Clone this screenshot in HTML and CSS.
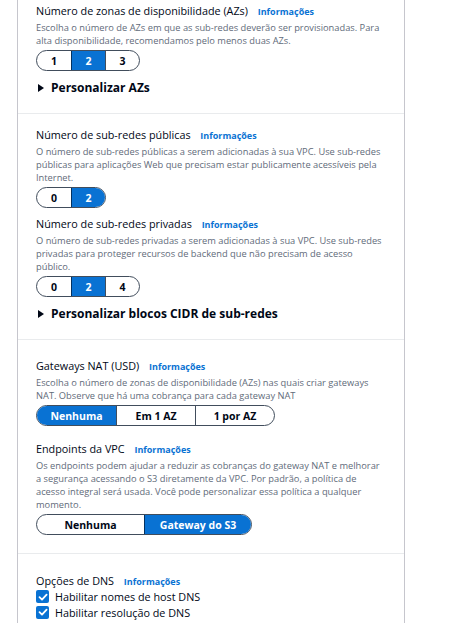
FILE: index.html
```html
<!DOCTYPE html>
<html lang="pt-BR">
<head>
<meta charset="utf-8">
<title>VPC</title>
<link rel="stylesheet" href="styles.css">
</head>
<body>
<div class="panel">
  <section class="section s1">
    <div class="label">Número de zonas de disponibilidade (AZs) <a class="info">Informações</a></div>
    <p class="desc">Escolha o número de AZs em que as sub-redes deverão ser provisionadas. Para alta disponibilidade, recomendamos pelo menos duas AZs.</p>
    <div class="seg seg-small">
      <span class="opt">1</span><span class="opt on">2</span><span class="opt">3</span>
    </div>
    <div class="expand"><span class="tri"></span>Personalizar AZs</div>
  </section>

  <section class="section s2">
    <div class="label">Número de sub-redes públicas <a class="info">Informações</a></div>
    <p class="desc">O número de sub-redes públicas a serem adicionadas à sua VPC. Use sub-redes públicas para aplicações Web que precisam estar publicamente acessíveis pela Internet.</p>
    <div class="seg seg-small">
      <span class="opt">0</span><span class="opt on">2</span>
    </div>
    <div class="label l2">Número de sub-redes privadas <a class="info">Informações</a></div>
    <p class="desc">O número de sub-redes privadas a serem adicionadas à sua VPC. Use sub-redes privadas para proteger recursos de backend que não precisam de acesso público.</p>
    <div class="seg seg-small">
      <span class="opt">0</span><span class="opt on">2</span><span class="opt">4</span>
    </div>
    <div class="expand"><span class="tri"></span>Personalizar blocos CIDR de sub-redes</div>
  </section>

  <section class="section s3">
    <div class="label">Gateways NAT (USD) <a class="info">Informações</a></div>
    <p class="desc">Escolha o número de zonas de disponibilidade (AZs) nas quais criar gateways NAT. Observe que há uma cobrança para cada gateway NAT</p>
    <div class="seg seg-nat">
      <span class="opt on">Nenhuma</span><span class="opt">Em 1 AZ</span><span class="opt">1 por AZ</span>
    </div>
    <div class="label l3">Endpoints da VPC <a class="info">Informações</a></div>
    <p class="desc">Os endpoints podem ajudar a reduzir as cobranças do gateway NAT e melhorar a segurança acessando o S3 diretamente da VPC. Por padrão, a política de acesso integral será usada. Você pode personalizar essa política a qualquer momento.</p>
    <div class="seg seg-ep">
      <span class="opt">Nenhuma</span><span class="opt on">Gateway do S3</span>
    </div>
  </section>

  <section class="section s4">
    <div class="label">Opções de DNS <a class="info">Informações</a></div>
    <label class="check"><span class="box"><svg viewBox="0 0 12 12" width="12" height="12"><path d="M2.5 6.2 L5 8.6 L9.6 3.6" fill="none" stroke="#fff" stroke-width="1.8" stroke-linecap="round" stroke-linejoin="round"/></svg></span>Habilitar nomes de host DNS</label>
    <label class="check"><span class="box"><svg viewBox="0 0 12 12" width="12" height="12"><path d="M2.5 6.2 L5 8.6 L9.6 3.6" fill="none" stroke="#fff" stroke-width="1.8" stroke-linecap="round" stroke-linejoin="round"/></svg></span>Habilitar resolução de DNS</label>
  </section>
</div>
</body>
</html>
```

FILE: styles.css
```css
html, body {
  margin: 0;
  padding: 0;
  background: #ffffff;
}
body {
  font-family: "Open Sans", "Noto Sans", Arial, sans-serif;
  color: #000716;
}
.panel {
  margin-left: 17px;
  width: 386px;
  border-left: 1px solid #c6c6cd;
  border-right: 1px solid #c6c6cd;
  min-height: 623px;
}
.section {
  padding: 0 19px 0 18px;
  border-bottom: 1px solid #e9ebed;
}
.s1 { padding-top: 3px; padding-bottom: 16px; }
.s2 { padding-top: 13px; padding-bottom: 16px; }
.s3 { padding-top: 18px; padding-bottom: 18px; }
.s4 { padding-top: 19px; border-bottom: none; }

.label {
  font-size: 10.8px;
  line-height: 16px;
  color: #000716;
}
.info {
  color: #0972d3;
  font-weight: 700;
  font-size: 9px;
  line-height: 1;
  margin-left: 7px;
}
.desc {
  margin: 2px 0 0;
  font-size: 9.3px;
  line-height: 13px;
  color: #5f6b7a;
}
.l2 { margin-top: 8px; }
.l3 { margin-top: 15px; }

.seg {
  display: flex;
  width: fit-content;
  margin-top: 3px;
  height: 21px;
  box-sizing: border-box;
  border: 1px solid #414d5c;
  border-radius: 11px;
  overflow: hidden;
}
.opt {
  display: flex;
  align-items: center;
  justify-content: center;
  font-size: 10.5px;
  font-weight: 700;
  color: #000716;
  border-left: 1px solid #414d5c;
  box-sizing: border-box;
}
.opt:first-child { border-left: none; }
.opt.on {
  background: #0972d3;
  color: #fff;
  border-color: #033160;
}
.seg-small .opt { width: 34px; }
.seg-nat .opt { width: 79px; }
.seg-ep .opt { width: 107px; }

.expand {
  margin-top: 8px;
  font-size: 12px;
  font-weight: 700;
  line-height: 18px;
  display: flex;
  align-items: center;
}
.tri {
  width: 0;
  height: 0;
  border-top: 4px solid transparent;
  border-bottom: 4px solid transparent;
  border-left: 6px solid #000716;
  margin: 0 7px 0 2px;
}
.check {
  display: flex;
  align-items: center;
  font-size: 10.8px;
  line-height: 15.5px;
}
.box {
  width: 13px;
  height: 13px;
  background: #0972d3;
  border-radius: 2px;
  display: inline-flex;
  align-items: center;
  justify-content: center;
  margin-right: 6px;
}
```
